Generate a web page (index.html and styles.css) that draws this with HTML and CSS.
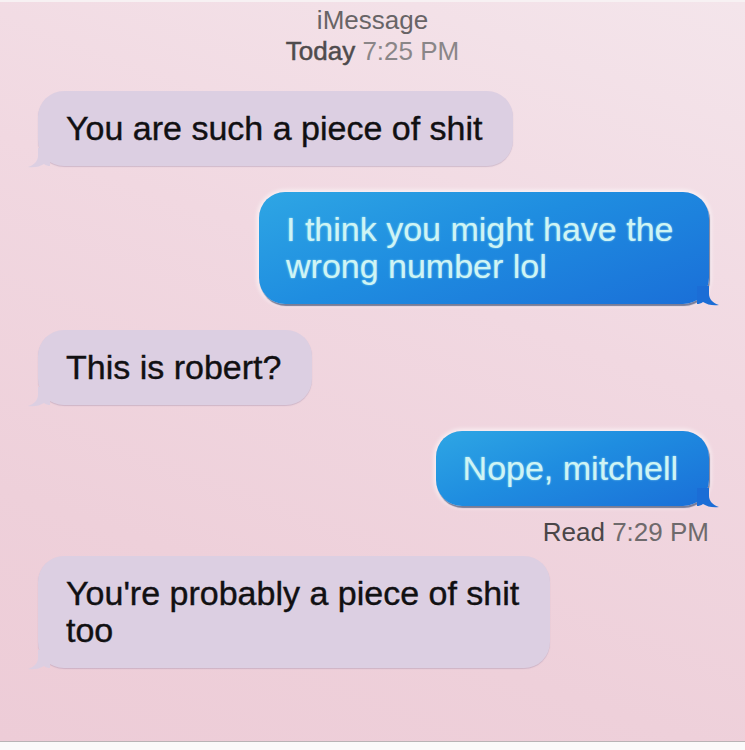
FILE: index.html
```html
<!DOCTYPE html>
<html lang="en">
<head>
    <meta charset="UTF-8">
    <meta name="viewport" content="width=device-width, initial-scale=1.0">
    <title>iMessage</title>
    <link rel="stylesheet" href="styles.css">
</head>
<body>
    <div class="screen">
        <header class="thread-head">
            <div class="service">iMessage</div>
            <div class="stamp"><span class="day">Today</span> 7:25 PM</div>
        </header>

        <div class="thread">
            <div class="msg in">
                You are such a piece of shit
                <svg class="tail" viewBox="0 0 22 20"><path d="M10 0 L10 8 C10 13 6 17 0 19 C6 20 12 18.5 16 16 C18 17.5 20 18 22 18 L22 0 Z"/></svg>
            </div>
            <div class="msg out">
                I think you might have the wrong number lol
                <svg class="tail" viewBox="0 0 22 20"><path d="M10 0 L10 8 C10 13 6 17 0 19 C6 20 12 18.5 16 16 C18 17.5 20 18 22 18 L22 0 Z"/></svg>
            </div>
            <div class="msg in">
                This is robert?
                <svg class="tail" viewBox="0 0 22 20"><path d="M10 0 L10 8 C10 13 6 17 0 19 C6 20 12 18.5 16 16 C18 17.5 20 18 22 18 L22 0 Z"/></svg>
            </div>
            <div class="msg out">
                Nope, mitchell
                <svg class="tail" viewBox="0 0 22 20"><path d="M10 0 L10 8 C10 13 6 17 0 19 C6 20 12 18.5 16 16 C18 17.5 20 18 22 18 L22 0 Z"/></svg>
            </div>
            <div class="receipt"><span class="read">Read</span> 7:29 PM</div>
            <div class="msg in last">
                You're probably a piece of shit<br>too
                <svg class="tail" viewBox="0 0 22 20"><path d="M10 0 L10 8 C10 13 6 17 0 19 C6 20 12 18.5 16 16 C18 17.5 20 18 22 18 L22 0 Z"/></svg>
            </div>
        </div>
    </div>
</body>
</html>
```

FILE: styles.css
```css
body {
    margin: 0;
    background-color: #fbfafa;
    font-family: 'Liberation Sans', Arial, sans-serif;
}

.screen {
    height: 739px;
    border-top: 2px solid #f7f1f3;
    border-bottom: 1px solid #b9b3b5;
    background: linear-gradient(200deg, #f4e5eb 0%, #f1d8e1 40%, #eed0da 75%, #edccd7 100%);
    overflow: hidden;
}

.thread-head {
    padding-top: 3px;
    text-align: center;
    font-size: 26px;
    line-height: 31px;
    color: #686466;
}

.stamp {
    color: #8a8688;
}

.stamp .day {
    color: #4f4b4d;
    -webkit-text-stroke: 0.5px #4f4b4d;
}

.thread {
    display: flex;
    flex-direction: column;
    align-items: flex-start;
    padding: 24px 36px 0 38px;
}

.msg {
    position: relative;
    box-sizing: border-box;
    padding: 19px 31px 19px 28px;
    border-radius: 26px;
    font-size: 34px;
    line-height: 37px;
    margin-bottom: 26px;
}

.msg .tail {
    position: absolute;
    bottom: -2px;
    left: -10px;
    width: 22px;
    height: 20px;
}

.msg.in {
    max-width: 540px;
    color: #111012;
    -webkit-text-stroke: 0.4px #111012;
    background-color: #dccfe2;
    box-shadow: 0 1px 1px rgba(150, 130, 160, 0.35);
}

.msg.in .tail {
    fill: #dccfe2;
}

.msg.out {
    align-self: flex-end;
    max-width: 450px;
    padding-left: 27px;
    color: #cff4f4;
    text-shadow: 0 0 2px rgba(190, 255, 255, 0.7);
    background: linear-gradient(160deg, #2ea6e4 0%, #1f8de0 45%, #1a6fd8 100%);
    box-shadow: 1px 2px 1px rgba(15, 35, 80, 0.55), 0 0 4px 2px rgba(255, 255, 255, 0.65);
}

.msg.out .tail {
    left: auto;
    right: -10px;
    transform: scaleX(-1);
    fill: #1b6dd6;
}

.receipt {
    align-self: flex-end;
    margin-top: -14px;
    margin-bottom: 10px;
    font-size: 26px;
    line-height: 28px;
    color: #6e6a6c;
}

.receipt .read {
    color: #4a4648;
}

.msg.last {
    margin-bottom: 0;
}
```
